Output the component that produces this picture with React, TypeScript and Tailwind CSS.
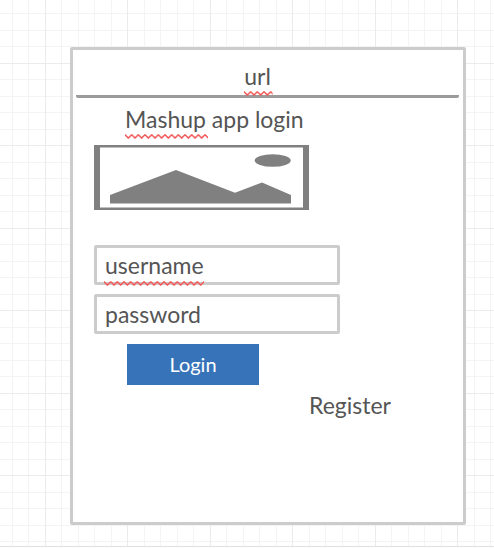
import { useId } from "react";
import type { ReactNode } from "react";

const minorLines = [16, 33, 49, 66, 99, 115, 132, 148];
const majorLines = [0, 82];

function GridPaper() {
  return (
    <svg className="absolute inset-0 h-full w-full" aria-hidden="true">
      <defs>
        <pattern id="grid" x="45" y="63" width="165" height="165" patternUnits="userSpaceOnUse">
          {minorLines.map((n) => (
            <g key={n} fill="#f4f4f4">
              <rect x={n} y="0" width="1" height="165" />
              <rect x="0" y={n} width="165" height="1" />
            </g>
          ))}
          {majorLines.map((n) => (
            <g key={n} fill="#ebebeb">
              <rect x={n} y="0" width="1" height="165" />
              <rect x="0" y={n} width="165" height="1" />
            </g>
          ))}
        </pattern>
      </defs>
      <rect width="100%" height="100%" fill="url(#grid)" />
    </svg>
  );
}

function Squiggle() {
  const id = useId();
  return (
    <svg className="block h-[5px] w-full" aria-hidden="true">
      <defs>
        <pattern id={id} width="6.67" height="5" patternUnits="userSpaceOnUse">
          <path d="M-1 0 L0 0.8 L3.33 4.1 L6.67 0.8 L7.67 0" fill="none" stroke="#f25555" strokeWidth="1.5" />
        </pattern>
      </defs>
      <rect width="100%" height="5" fill={`url(#${id})`} />
    </svg>
  );
}

function Misspelled({ children }: { children: ReactNode }) {
  return (
    <span className="relative inline-block">
      {children}
      <span className="absolute -right-0.5 left-0 top-full">
        <Squiggle />
      </span>
    </span>
  );
}

function PicturePlaceholder() {
  return (
    <svg
      className="mt-[11px] block h-[65px] w-[215px] max-w-full"
      viewBox="0 0 215 65"
      role="img"
      aria-label="Picture"
    >
      <rect width="215" height="65" fill="#808080" />
      <rect x="6" y="2.5" width="203" height="60" fill="#fff" />
      <ellipse cx="178.700" cy="15.500" rx="18" ry="6.300" fill="#808080" />
      <path d="M16 58.500V50L82 25L141 47.800L168 37.500L197 50V58.500Z" fill="#808080" />
    </svg>
  );
}

const field =
  "block h-10 w-full rounded-[2px] border-[3px] border-[#cccccc] bg-white px-2 text-[23px] text-[#555555] outline-none placeholder:text-[#555555] placeholder:opacity-100";

export default function App() {
  return (
    <div className="bg-white pb-px font-['Lato',sans-serif] text-[23px] text-[#555555]">
      <main className="relative border-b border-[#e0e0e0] pt-[47px] pr-7 pb-[21px] pl-[70px]">
        <GridPaper />
        <section className="relative flex min-h-[478px] flex-col rounded-[2px] border-[3px] border-[#cccccc] bg-white">
          <header className="mr-1 ml-[3px] rounded-b-[2px] border-b-[3px] border-[#9b9b9b] pt-3 pr-5 pb-1 text-center leading-[29px]">
            <Misspelled>url</Misspelled>
          </header>
          <form className="flex flex-col px-[21px]" onSubmit={(e) => e.preventDefault()}>
            <h1 className="mt-[7px] pl-[31px] leading-[29px]">
              <Misspelled>Mashup</Misspelled> app login
            </h1>
            <PicturePlaceholder />
            <div className="relative mt-[35px] w-[246px] max-w-full">
              <input className={field} type="text" placeholder="username" aria-label="username" />
              <span className="absolute -bottom-px left-[10px] w-[100px]">
                <Squiggle />
              </span>
            </div>
            <div className="mt-[9px] w-[246px] max-w-full">
              <input className={field} type="text" placeholder="password" aria-label="password" />
            </div>
            <button
              type="submit"
              className="mt-[10px] ml-[33px] h-[41px] w-[132px] bg-[#3773b8] pb-0.5 text-xl text-white"
            >
              Login
            </button>
            <a href="#register" className="mt-[6px] mr-[51px] self-end leading-[29px]">
              Register
            </a>
          </form>
        </section>
      </main>
    </div>
  );
}
